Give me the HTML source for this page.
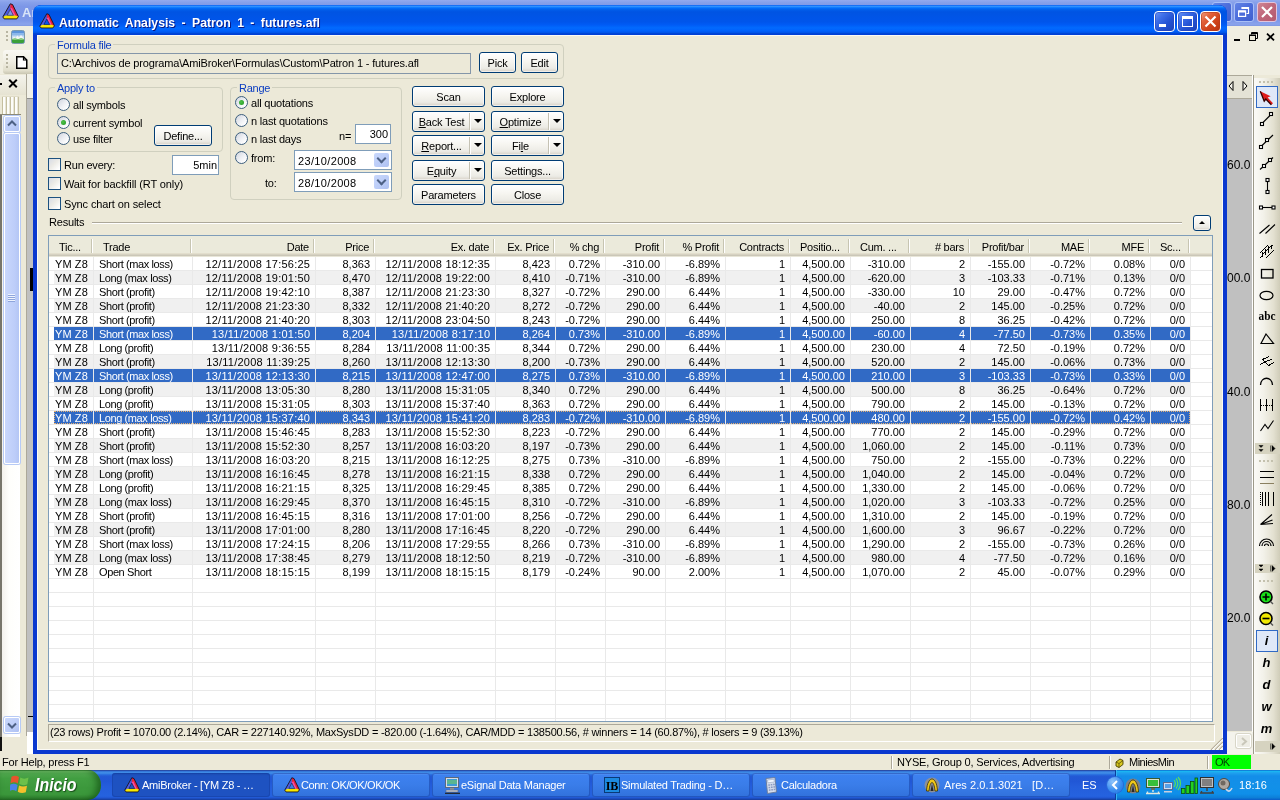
<!DOCTYPE html>
<html lang="es"><head><meta charset="utf-8"><title>AmiBroker - Automatic Analysis</title>
<style>
*{box-sizing:border-box;margin:0;padding:0}
html,body{width:1280px;height:800px;overflow:hidden}
body{will-change:transform;position:relative;background:#ECE9D8;font-family:"Liberation Sans",sans-serif;font-size:11px;color:#000;line-height:13px}
.abs,.abs>*{position:absolute}
div,span,i,b{position:absolute;display:block}
span.t{white-space:nowrap}
u{text-decoration:underline}

/* ===== main (inactive) window ===== */
#mtitle{left:0;top:0;width:1280px;height:26px;background:linear-gradient(to bottom,#93aaee 0,#86a0ea 10%,#7d97e7 25%,#7a94e6 55%,#7f99e8 80%,#8aa3ec 93%,#7f98e2 100%)}
#mtitle .txt{left:22px;top:5px;font:bold 13px "Liberation Sans",sans-serif;color:#d8e4f8;white-space:nowrap;line-height:16px}
#menubar{left:0;top:26px;width:1280px;height:24px;background:#f0eee1}
#tb1{left:0;top:26px;width:1280px;height:49px;background:#f0eee1}
#tb2{left:0;top:72px;width:1280px;height:4px;background:#ECE9D8}

/* ===== dialog window ===== */
#dlg{left:33px;top:5px;width:1194px;height:749px;background:#0a38cf;border-radius:8px 8px 0 0;overflow:hidden}
#dtitle{left:0;top:0;width:1194px;height:30px;border-radius:8px 8px 0 0;background:linear-gradient(to bottom,#0058ee 0%,#3593ff 4%,#288eff 6%,#127dff 8%,#036ffc 10%,#0262ee 14%,#0057e5 20%,#0054e3 24%,#0055eb 56%,#005bf5 66%,#026afe 76%,#0061fc 86%,#0055ea 92%,#0048d6 94%,#003dd7 100%)}
#dtitle .txt{left:26px;top:10px;font:bold 13px "Liberation Sans",sans-serif;color:#fff;white-space:nowrap;line-height:16px;text-shadow:1px 1px 0 #0a1883;letter-spacing:0;word-spacing:3.16px;transform:scaleX(.942);transform-origin:0 0}
#dclient{left:4px;top:30px;width:1186px;height:715px;background:#ECE9D8;border:1px solid #fbfaf5}
.wb{top:6px;width:21px;height:21px;border:1px solid #fff;border-radius:4px;background:linear-gradient(135deg,#6a95f5 0,#3d6ee8 30%,#2453d4 60%,#1b41b8 100%);box-shadow:inset 0 0 0 1px rgba(40,70,190,.6)}
.wb.cl{background:linear-gradient(135deg,#f0a080 0,#e2633c 30%,#d1451c 60%,#b93210 100%);box-shadow:inset 0 0 0 1px rgba(180,60,30,.6)}

/* ===== form controls (coords relative to page via #form at 0,0) ===== */
#form{left:0;top:0;width:0;height:0}
.grp{border:1px solid #d0d0bf;border-radius:4px}
.gl{color:#0a3cc0;background:#ECE9D8;padding:0 2px;white-space:nowrap;letter-spacing:-.25px}
.lbl{white-space:nowrap;letter-spacing:-.2px}
.btn{border:1px solid #003c74;border-radius:3px;background:linear-gradient(to bottom,#fff 0,#f6f5f0 45%,#ecebe5 80%,#d6d0c5 100%);text-align:center;line-height:20px;white-space:nowrap;letter-spacing:-.2px;box-shadow:inset 0 0 0 1px rgba(255,255,255,.6)}
.btn span{position:static;display:inline}
.edit{border:1px solid #7f9db9;background:#fff;text-align:right;padding:0 2px;white-space:nowrap}
.radio{width:13px;height:13px;border:1px solid #3d5f7e;border-radius:50%;background:linear-gradient(135deg,#d6dae2 10%,#eef0f4 50%,#fff 85%)}
.radio.on::after{content:"";position:absolute;left:3px;top:3px;width:5px;height:5px;border-radius:50%;background:radial-gradient(circle at 40% 40%,#4fc24a,#1f961f)}
.chk{width:13px;height:13px;border:1px solid #1c5180;background:linear-gradient(135deg,#d9dde6 5%,#ecebe6 45%,#fff 90%)}
.combo{border:1px solid #7f9db9;background:#fff}
.combo .v{left:3px;top:4px;white-space:nowrap;letter-spacing:.35px}
.combo .dd{left:79px;top:2px;width:15px;height:14px;border-radius:2px;background:linear-gradient(135deg,#c9d8fc,#bccdf8 55%,#adc0f1)}
.combo .dd::after{content:"";position:absolute;left:4px;top:2px;width:5px;height:5px;border-right:2px solid #4d6185;border-bottom:2px solid #4d6185;transform:rotate(45deg)}

/* ===== list view ===== */
.lv{left:48px;top:235px;width:1165px;height:487px;border:1px solid #7f9db9;background:#fff;overflow:hidden}
.lvh{left:0;top:0;width:1163px;height:21px;background:linear-gradient(to bottom,#ebeadb 0,#ebeadb 17px,#e2decd 17px,#e2decd 18px,#d6d2c2 18px,#d6d2c2 19px,#cbc7b8 19px,#cbc7b8 20px,#e8e6d8 20px)}
.hc{top:4px;height:14px;line-height:14px;white-space:nowrap;letter-spacing:-.25px}
.hc.r{text-align:right}
.hd{top:3px;width:1px;height:14px;background:#c7c5b2;box-shadow:1px 0 0 #fff}
.rb{left:5px;width:1136px;height:13px;background:#f0f0f0}
.rb.sel{background:#316ac5}
.rb.foc{outline:1px dotted #e8b070;outline-offset:-1px}
.row{left:0;width:1163px;height:14px}
.row.sel{color:#fff}
.c{top:0;height:14px;line-height:14px;white-space:nowrap}
.c.r{text-align:right}
.c.d{letter-spacing:.25px;margin-left:.25px}
.c.c1{letter-spacing:-.39px}
.c.c0{letter-spacing:.1px}
.grid{left:0;top:21px;width:1163px;height:470px;background:repeating-linear-gradient(to bottom,transparent 0,transparent 13px,#e9e9e9 13px,#e9e9e9 14px);pointer-events:none}
.vl{top:21px;width:1px;height:470px;background:#e9e9e9}
.row.sel ~ .x{}

/* ===== status / taskbar ===== */
#mstatus{left:0;top:754px;width:1280px;height:17px;background:#ECE9D8}
#taskbar{left:0;top:770px;width:1280px;height:30px;background:linear-gradient(to bottom,#1f2f86 0,#3165c4 3%,#3682e5 6%,#4490e6 10%,#3883e5 12%,#2b71e0 15%,#2663da 18%,#235bd6 20%,#2258d5 23%,#2157d6 38%,#245ddb 54%,#2562df 86%,#245fdc 89%,#2158d4 92%,#1d4ec0 95%,#1941a5 98%)}
#start{left:0;top:0;width:101px;height:30px;border-radius:0 13px 13px 0/0 15px 15px 0;background:linear-gradient(to bottom,#2f7d2f 0,#6cbf66 5%,#52ac50 12%,#429f42 28%,#3c983c 60%,#3c9a3c 82%,#338833 94%,#2a742a 100%);box-shadow:inset -4px 0 7px rgba(0,50,0,.5)}
#start .txt{left:35px;top:5px;font:italic bold 18px "Liberation Sans",sans-serif;color:#fff;line-height:20px;text-shadow:1px 1px 1px #1a4d1a;letter-spacing:0;transform:scaleX(.885);transform-origin:0 0}
.tbtn{top:3px;height:24px;border-radius:3px;background:linear-gradient(to bottom,#5e9bf5 0,#3d81f0 10%,#3a7de9 50%,#3171dc 100%);color:#fff;white-space:nowrap;box-shadow:inset 0 0 0 1px rgba(20,60,160,.5)}
.tbtn.act{background:linear-gradient(to bottom,#1a49ad 0,#1e52c1 12%,#1e52c1 100%)}
.tbtn .txt{left:30px;top:6px;color:#fff;white-space:nowrap;letter-spacing:-.25px}
#tray{left:951px;top:0;width:329px;height:30px;background:linear-gradient(to bottom,#095bc9 0,#19b9f3 4%,#1fa0ee 10%,#138ee9 20%,#1290e8 55%,#0f8fe9 80%,#0d7fd8 92%,#095bc9 100%);box-shadow:inset 1px 0 0 #0a3e9a,inset 2px 0 0 #37b4f4}
.ax{font-size:12px;letter-spacing:0;line-height:14px;color:#000}
.mwb{width:20px;height:20px;border:1px solid #a9bff6;border-radius:3px;background:linear-gradient(135deg,#6384e6 0,#4d6edc 45%,#3f5fcd 100%)}
.mwb.cl{background:linear-gradient(135deg,#cf8694 0,#c0687c 45%,#b45a70 100%);border-color:#e2c4dc}
.btn.sp{text-align:left}
.btn.sp .bl{position:absolute;display:block;left:0;top:0;width:57px;text-align:center}
.btn.sp::before{content:"";position:absolute;left:56px;top:1px;width:1px;height:17px;background:#c5c2b4;box-shadow:1px 0 0 #fff}
.btn.sp::after{content:"";position:absolute;left:61px;top:7px;border:4px solid transparent;border-top:4px solid #000;border-bottom:0}
.ti{position:absolute;left:12px;top:4px}
.sep{top:2px;width:1px;height:13px;background:#aca899;box-shadow:1px 0 0 #fff}

</style></head><body>
<!-- ================= MAIN WINDOW (background) ================= -->
<div id="mtitle"><span class="txt">Ar</span></div>
<div id="menubar"></div>
<div id="tb1"></div>
<div id="leftstrip" style="left:0;top:0;width:40px;height:754px">
  <!-- AmiBroker icon in main title -->
  <svg style="position:absolute;left:2px;top:3px" width="17" height="17" viewBox="0 0 17 17">
    <polygon points="8.300,.800 .800,14 3.300,15.800 8.300,6.200" fill="#4a5ae0"/><polygon points="8.300,.800 10.600,1.600 16.400,13.600 13.400,14.200 8.300,6.200" fill="#e8203a"/><polygon points="8.300,6.200 9.800,4.600 13.400,12.200 11.400,12.400" fill="#f050b0"/><polygon points=".800,14 3.600,12.400 13.600,12.400 16.400,13.600 14.800,15.900 2.200,15.900" fill="#f8e800"/><path d="M8.300 .800 L.800 14 L2.200 15.900 L14.800 15.900 L16.400 13.600 L10.600 1.600 Z" fill="none" stroke="#181018" stroke-width=".9" stroke-linejoin="round"/><path d="M8.300 6.400 L5.200 12.300 L11.400 12.300 Z" fill="#7e98e8" stroke="#181018" stroke-width=".5"/>
  </svg>
  <!-- menubar row -->
  <div style="left:6px;top:31px;width:2px;height:12px;background:repeating-linear-gradient(to bottom,#b8b5a2 0,#b8b5a2 2px,transparent 2px,transparent 4px)"></div>
  <svg style="position:absolute;left:11px;top:30px" width="14" height="14" viewBox="0 0 14 14">
    <rect x=".500" y=".500" width="13" height="13" rx="2" fill="#5c94dc" stroke="#7a9ab0" stroke-width="1"/>
    <rect x="1" y="3" width="12" height="3" fill="#8cb8ea"/>
    <rect x="1" y="5.500" width="12" height="3" fill="#c4daf2"/>
    <path d="M1 9 L3 6.500 L4.500 8 L6.500 5.500 L8 7.500 L10 5 L13 8.500 L13 10 L1 10 Z" fill="#f4f6f6"/>
    <path d="M1 9.500 H13 V11.500 Q13 13 11.500 13 H2.500 Q1 13 1 11.500 Z" fill="#3aa03a"/>
    <path d="M1 9.500 L4 8.700 L7 9.600 L10 8.600 L13 9.500" fill="none" stroke="#6cc060" stroke-width="1"/>
  </svg>
  <!-- toolbar row 2 -->
  <div style="left:3px;top:50px;width:60px;height:24px;border-radius:3px 0 0 3px;background:linear-gradient(to bottom,#f9f8f3 0,#f1efe4 45%,#e2dfcd 85%,#c9c6b2 100%)"></div>
  <div style="left:6px;top:54px;width:2px;height:14px;background:repeating-linear-gradient(to bottom,#b8b5a2 0,#b8b5a2 2px,transparent 2px,transparent 4px)"></div>
  <svg style="position:absolute;left:16px;top:56px" width="12" height="13" viewBox="0 0 12 13">
    <path d="M.75 .75 H7.5 L10.75 4 V12.25 H.75 Z" fill="#fff" stroke="#000" stroke-width="1.5" stroke-linejoin="miter"/>
    <path d="M7.5 .75 V4 H10.75" fill="none" stroke="#000" stroke-width="1.2"/>
  </svg>
  <!-- panel header -->
  <div style="left:0;top:74px;width:27px;height:680px;background:#ECE9D8"></div>
  <div style="left:0;top:75px;width:26px;height:20px;background:linear-gradient(to bottom,#f4f3ec,#e6e3d2)"></div>
  <div style="left:0;top:83px;width:2px;height:2px;background:#000"></div>
  <svg style="position:absolute;left:8px;top:79px" width="10" height="9" viewBox="0 0 10 9"><path d="M1.2 .8 L8.8 8.2 M8.8 .8 L1.2 8.2" stroke="#000" stroke-width="2"/></svg>
  <div style="left:26px;top:74px;width:1px;height:662px;background:#aca899"></div>
  <div style="left:27px;top:74px;width:6px;height:24px;background:#f2f1e8"></div>
  <div style="left:27px;top:98px;width:6px;height:634px;background:#c0c0c0;border-top:1px solid #8c8c8c"></div>
  <div style="left:27px;top:732px;width:6px;height:22px;background:#fff"></div>
  <div style="left:30px;top:268px;width:3px;height:23px;background:#000"></div>
  <div style="left:28px;top:716px;width:5px;height:1px;background:#000"></div>
  <!-- tab strip -->
  <div style="left:2px;top:96px;width:17px;height:18px;background:repeating-linear-gradient(to right,#c5bfa0 0,#c5bfa0 1px,#fdfdfa 1px,#fdfdfa 3px,#e8e5d6 3px,#e8e5d6 4px);border-top:1px solid #e0dcc8"></div>
  <div style="left:0;top:114px;width:21px;height:1px;background:#8d8a78"></div>
  <!-- scrollbar -->
  <div style="left:0;top:115px;width:2px;height:622px;background:#77756a"></div>
  <div style="left:2px;top:115px;width:18px;height:622px;background:linear-gradient(to right,#f3f1ec,#fefefb 40%,#fff)"></div>
  <div style="left:4px;top:116px;width:16px;height:16px;border:1px solid #fff;border-radius:2px;background:linear-gradient(135deg,#cad8fc,#bccdf8 60%,#aec0f2);box-shadow:0 0 0 1px #b7caf5"></div>
  <svg style="position:absolute;left:7px;top:120px" width="10" height="7" viewBox="0 0 10 7"><path d="M1 5.5 L5 1.5 L9 5.5" fill="none" stroke="#4d6185" stroke-width="2"/></svg>
  <div style="left:4px;top:133px;width:16px;height:331px;border:1px solid #fff;border-radius:2px;background:linear-gradient(to right,#c9d7fc,#bdcdf9 70%,#b4c6f4);box-shadow:0 0 0 1px #b7caf5"></div>
  <div style="left:8px;top:294px;width:7px;height:8px;background:repeating-linear-gradient(to bottom,#eef3fe 0,#eef3fe 1px,#8ea5dc 1px,#8ea5dc 2px)"></div>
  <div style="left:4px;top:717px;width:16px;height:16px;border:1px solid #fff;border-radius:2px;background:linear-gradient(135deg,#cad8fc,#bccdf8 60%,#aec0f2);box-shadow:0 0 0 1px #b7caf5"></div>
  <svg style="position:absolute;left:7px;top:722px" width="10" height="7" viewBox="0 0 10 7"><path d="M1 1.5 L5 5.5 L9 1.5" fill="none" stroke="#4d6185" stroke-width="2"/></svg>
  <div style="left:0;top:737px;width:2px;height:14px;background:#111"></div>
</div>

<div id="rightstrip" style="left:1227px;top:26px;width:53px;height:728px">
  <!-- main window caption buttons (inactive) -->
  <div class="mwb" style="left:-15px;top:-24px"></div>
  <div class="mwb" style="left:7px;top:-24px"><svg width="18" height="18" viewBox="0 0 18 18" style="position:absolute;left:0;top:0"><path d="M7 6 V4.500 H13.500 V10.500 H11.500" fill="none" stroke="#fff" stroke-width="1.200"/><path d="M7 5 H13.500" stroke="#fff" stroke-width="2"/><rect x="3.600" y="8" width="7" height="5.400" fill="none" stroke="#fff" stroke-width="1.200"/><path d="M3.600 8.500 H10.600" stroke="#fff" stroke-width="2"/></svg></div>
  <div class="mwb cl" style="left:30px;top:-24px"><svg width="18" height="18" viewBox="0 0 18 18" style="position:absolute;left:0;top:0"><path d="M4 4 L14 14 M14 4 L4 14" stroke="#fff" stroke-width="2.200"/></svg></div>
  <!-- MDI controls -->
  <div style="left:7px;top:13px;width:6px;height:2px;background:#000"></div>
  <svg style="position:absolute;left:22px;top:6px" width="9" height="9" viewBox="0 0 9 9"><path d="M2.5 .5 H8.5 V6.5 H6.5 M2.5 .5 V1.5 H8.5 M2.5 1 V2.5" fill="none" stroke="#000" stroke-width="1"/><rect x=".5" y="3" width="6" height="5.5" fill="#ECE9D8" stroke="#000" stroke-width="1"/><path d="M.5 3.5 H6.5" stroke="#000" stroke-width="1"/></svg>
  <svg style="position:absolute;left:39px;top:7px" width="9" height="8" viewBox="0 0 9 8"><path d="M1 .7 L8 7.3 M8 .7 L1 7.3" stroke="#000" stroke-width="1.8"/></svg>
  <!-- tab nav -->
  <div style="left:0;top:49px;width:27px;height:24px;background:#e4e2d5;border:1px solid #aca899;border-left:0"></div>
  <svg style="position:absolute;left:1px;top:54px" width="24" height="12" viewBox="0 0 24 12"><path d="M5 1.5 L1 6 L5 10.5 Z M15 1.5 L19 6 L15 10.5 Z" fill="#f4f3ec" stroke="#000" stroke-width="1"/></svg>
  <!-- chart gray -->
  <div style="left:0;top:73px;width:25px;height:632px;background:#c0c0c0"></div><div style="left:25px;top:49px;width:1px;height:679px;background:#fff"></div>
  <span class="lbl ax" style="left:0;top:132px">60.0</span>
  <span class="lbl ax" style="left:0;top:245px">00.0</span>
  <span class="lbl ax" style="left:0;top:359px">40.0</span>
  <span class="lbl ax" style="left:0;top:472px">80.0</span>
  <span class="lbl ax" style="left:0;top:585px">20.0</span>
  <div style="left:0;top:706px;width:26px;height:22px;background:#f4f3ec"></div>
  <div style="left:9px;top:708px;width:15px;height:14px;border:1px solid #fff;border-radius:2px;background:#eeede5;box-shadow:0 0 0 1px #d8d6c8"></div>
  <svg style="position:absolute;left:13px;top:711px" width="8" height="9" viewBox="0 0 8 9"><path d="M2 1 L6 4.5 L2 8" fill="none" stroke="#c9c7ba" stroke-width="2"/></svg>
  <div style="left:26px;top:49px;width:1px;height:679px;background:#9d9a8a"></div>
  <!-- right toolbar -->
  <div id="rtb" style="left:27px;top:52px;width:26px;height:676px;background:linear-gradient(to right,#fbfaf7 0,#f3f2ea 35%,#e3e0d0 75%,#cfccb8 100%)"></div>
<svg style="position:absolute;left:27px;top:52px" width="26" height="676" viewBox="1254 78 26 676" font-family="Liberation Sans, sans-serif">
  <g fill="none" stroke="#000" stroke-width="1" shape-rendering="crispEdges">
  <!-- grippers -->
  <g stroke="#c4c1ae" stroke-dasharray="2 2" stroke-width="2"><path d="M1259 82 H1274"/><path d="M1259 461 H1274"/><path d="M1259 581 H1274"/></g>
  <!-- selected arrow tool -->
  <rect x="1256.5" y="86.500" width="21" height="21" fill="#dfe8f8" stroke="#316ac5"/>
  </g>
  <path d="M1260.300 91.300 L1264.200 101.200 L1265.800 99 L1271.300 104.800 L1273 103.200 L1267.600 97.500 L1270.600 96.300 Z" fill="#e01a1a"/><path d="M1260.300 91.300 L1264.200 101.200 L1265.800 99 L1271.300 104.800" fill="none" stroke="#300" stroke-width="1.300"/>
  <g fill="none" stroke="#000" stroke-width="1.100">
  <!-- 1 trend line -->
  <path d="M1262.500 123 L1270.500 115"/><rect x="1260.500" y="122.500" width="3" height="3" fill="#fff"/><rect x="1269.500" y="112.500" width="3" height="3" fill="#fff"/>
  <!-- 2 ray -->
  <path d="M1261.500 146 L1273 135"/><rect x="1259.500" y="145.500" width="3" height="3" fill="#fff"/><rect x="1265.500" y="138.500" width="3" height="3" fill="#fff"/>
  <!-- 3 extended -->
  <path d="M1260 169.500 L1273 157.500"/><rect x="1262.500" y="164.500" width="3" height="3" fill="#fff"/><rect x="1268.500" y="158.500" width="3" height="3" fill="#fff"/>
  <!-- 4 vertical seg -->
  <path d="M1267.500 181 V191"/><rect x="1266" y="178.500" width="3" height="3" fill="#fff"/><rect x="1266" y="190.500" width="3" height="3" fill="#fff"/>
  <!-- 5 horizontal seg -->
  <path d="M1261 207.500 H1273"/><rect x="1259.500" y="206" width="3" height="3" fill="#fff"/><rect x="1272" y="206" width="3" height="3" fill="#fff"/>
  <!-- 6 parallel -->
  <path d="M1259.500 233.500 L1269.500 225 M1265.500 233.500 L1275 224.500"/>
  <!-- 7 channel hatch -->
  <g shape-rendering="crispEdges" stroke-width="1"><path d="M1260 253 L1268 245 M1266 258 L1274 250"/>
  <path d="M1260 258 L1262.500 255.500 M1262.500 252 V257 M1262.500 254.500 L1265.500 251.500 M1265.500 249 V255 M1265.500 251.500 L1268.500 248.500 M1268.500 246 V253 M1268.500 248.500 L1271.500 246 M1271.500 245 V249 M1271.500 246 L1273 245"/></g>
  <!-- 8 rect -->
  <rect x="1261.500" y="269.500" width="11.500" height="8.500" stroke-width="1.300"/>
  <!-- 9 ellipse -->
  <ellipse cx="1266.500" cy="295.500" rx="6.500" ry="4.200" stroke-width="1.200"/>
  <!-- 11 triangle -->
  <path d="M1266 334 L1261 343.500 H1273.500 Z" stroke-width="1.200"/>
  <!-- 12 pitchfork -->
  <g shape-rendering="crispEdges" stroke-width="1"><path d="M1260 364.500 L1265 362 M1262.500 359.500 L1268.500 365.500"/>
  <path d="M1262.500 359.500 L1269 356.500 M1265 362 L1272 359 M1268.500 365.500 L1274 362.500"/></g>
  <!-- 13 arc -->
  <path d="M1260.500 385 C1261 376 1272 376 1272.500 385" stroke-width="1.300"/>
  <!-- 14 cycles -->
  <g shape-rendering="crispEdges"><path d="M1260.500 399 V411 M1266.500 399 V411 M1272.500 399 V411" stroke-width="1"/><path d="M1261 405.500 H1273" stroke-dasharray="1 1"/></g>
  <!-- 15 zigzag -->
  <path d="M1260.500 431 L1265 424.500 L1268 428.500 L1273.500 420.500" stroke-width="1.100"/>
  <!-- 16 fib lines -->
  <g shape-rendering="crispEdges"><path d="M1260 471.500 H1274 M1260 477.500 H1274" stroke-width="1"/><path d="M1260 483.500 H1274" stroke="#8a8060" stroke-width="1"/></g>
  <!-- 17 fib time -->
  <g shape-rendering="crispEdges"><path d="M1260.500 492 V506" stroke-dasharray="1 1"/><path d="M1262.500 492 V506 M1265.500 492 V506 M1268.500 492 V506 M1273.500 492 V506" stroke-width="1"/></g>
  <!-- 18 fan -->
  <path d="M1260.500 524.500 L1272 514.500 M1260.500 524.500 L1272.500 520 M1260.500 524.500 L1273 523.500"/>
  <!-- 19 arcs -->
  <path d="M1259.500 546 A7 7 0 0 1 1273.500 546 M1262 546 A4.500 4.500 0 0 1 1271 546 M1264.500 546 A2 2 0 0 1 1268.500 546" stroke-width="1.200"/>
  </g>
  <!-- 10 abc -->
  <text x="1258.500" y="320" font-family="Liberation Serif, serif" font-weight="bold" font-size="11.500" fill="#000" textLength="17" lengthAdjust="spacingAndGlyphs">abc</text>
  <!-- overflow bars -->
  <g>
    <rect x="1255" y="443" width="25" height="11" fill="#d6d3c0"/><rect x="1255" y="564" width="25" height="9" fill="#d6d3c0"/><rect x="1255" y="741" width="25" height="11" fill="#d6d3c0"/>
    <path d="M1259 445.500 h4 l-2 2 Z M1259 449.500 h4 l-2 2 Z M1270.500 445.500 v6 M1272 445.500 l3 3 l-3 3 Z" fill="#000" stroke="#000" stroke-width=".5"/>
    <path d="M1259 565 h4 l-2 2 Z M1259 569 h4 l-2 2 Z M1270.500 565.500 v6 M1272 565.500 l3 3 l-3 3 Z" fill="#000" stroke="#000" stroke-width=".5"/>
    <path d="M1270.500 743.500 v6 M1272 743.500 l3 3 l-3 3 Z" fill="#000" stroke="#000" stroke-width=".5"/>
  </g>
  <!-- 20 zoom in / 21 zoom out -->
  <circle cx="1266" cy="597" r="6" fill="#18e018" stroke="#000" stroke-width="1.600"/><path d="M1262.500 597 h7 M1266 593.500 v7" stroke="#000" stroke-width="1.600"/><path d="M1270.500 601.500 l2.500 2.500" stroke="#555" stroke-width="1.400"/>
  <circle cx="1266" cy="618.500" r="6" fill="#f0e800" stroke="#000" stroke-width="1.600"/><path d="M1262.500 618.500 h7" stroke="#000" stroke-width="1.600"/><path d="M1270.500 623 l2.500 2.500" stroke="#555" stroke-width="1.400"/>
  <!-- 22 selected i -->
  <rect x="1256.500" y="630" width="21" height="21" fill="#dfe8f8" stroke="#316ac5" shape-rendering="crispEdges"/>
  <g font-style="italic" font-weight="bold" font-size="13" fill="#000" text-anchor="middle">
    <text x="1266.500" y="645">i</text>
    <text x="1266.500" y="667">h</text>
    <text x="1266.500" y="689">d</text>
    <text x="1266.500" y="711">w</text>
    <text x="1266.500" y="733">m</text>
  </g>
</svg>

</div>


<!-- ================= DIALOG ================= -->
<div id="dlg">
  <div id="dtitle">
    <svg style="position:absolute;left:6px;top:8px" width="16" height="16" viewBox="0 0 17 17">
      <polygon points="8.300,.800 .800,14 3.300,15.800 8.300,6.200" fill="#4a5ae0"/><polygon points="8.300,.800 10.600,1.600 16.400,13.600 13.400,14.200 8.300,6.200" fill="#e8203a"/><polygon points="8.300,6.200 9.800,4.600 13.400,12.200 11.400,12.400" fill="#f050b0"/><polygon points=".800,14 3.600,12.400 13.600,12.400 16.400,13.600 14.800,15.900 2.200,15.900" fill="#f8e800"/><path d="M8.300 .800 L.800 14 L2.200 15.900 L14.800 15.900 L16.400 13.600 L10.600 1.600 Z" fill="none" stroke="#181018" stroke-width=".9" stroke-linejoin="round"/><path d="M8.300 6.400 L5.200 12.300 L11.400 12.300 Z" fill="#0a55e6" stroke="#181018" stroke-width=".5"/>
    </svg>
    <span class="txt">Automatic Analysis - Patron 1 - futures.afl</span>
    <div class="wb" style="left:1121px"><i style="left:4px;top:12px;width:7px;height:3px;background:#fff"></i></div>
    <div class="wb" style="left:1144px"><i style="left:4px;top:4px;width:11px;height:11px;border:1px solid #fff;border-top-width:3px"></i></div>
    <div class="wb cl" style="left:1167px"><svg width="19" height="19" viewBox="0 0 19 19" style="position:absolute;left:0;top:0"><path d="M4.500 4.500 L14.500 14.500 M14.500 4.500 L4.500 14.500" stroke="#fff" stroke-width="2.200"/></svg></div>
  </div>
  <div id="dclient"></div>
</div>

<!-- ================= FORM (page coords) ================= -->
<div id="form">
  <!-- Formula file -->
  <div class="grp" style="left:48px;top:44px;width:516px;height:35px"></div>
  <span class="gl" style="left:55px;top:39px">Formula file</span>
  <div class="edit" style="left:57px;top:53px;width:414px;height:21px;background:#ECE9D8;border-color:#8496a9;text-align:left;line-height:19px;padding-left:3px;letter-spacing:-.15px">C:\Archivos de programa\AmiBroker\Formulas\Custom\Patron 1 - futures.afl</div>
  <div class="btn" style="left:479px;top:52px;width:37px;height:21px">Pick</div>
  <div class="btn" style="left:521px;top:52px;width:37px;height:21px">Edit</div>

  <!-- Apply to -->
  <div class="grp" style="left:48px;top:87px;width:175px;height:65px"></div>
  <span class="gl" style="left:55px;top:82px">Apply to</span>
  <div class="radio" style="left:57px;top:98px"></div><span class="lbl" style="left:73px;top:99px">all symbols</span>
  <div class="radio on" style="left:57px;top:116px"></div><span class="lbl" style="left:73px;top:117px">current symbol</span>
  <div class="radio" style="left:57px;top:132px"></div><span class="lbl" style="left:73px;top:133px">use filter</span>
  <div class="btn" style="left:154px;top:125px;width:58px;height:21px">Define...</div>

  <div class="chk" style="left:48px;top:158px"></div><span class="lbl" style="left:64px;top:159px">Run every:</span>
  <div class="edit" style="left:172px;top:155px;width:47px;height:20px;line-height:18px;padding-right:1px">5min</div>
  <div class="chk" style="left:48px;top:177px"></div><span class="lbl" style="left:64px;top:178px;letter-spacing:-.11px">Wait for backfill (RT only)</span>
  <div class="chk" style="left:48px;top:197px"></div><span class="lbl" style="left:64px;top:198px;letter-spacing:-.115px">Sync chart on select</span>

  <!-- Range -->
  <div class="grp" style="left:230px;top:87px;width:172px;height:113px"></div>
  <span class="gl" style="left:237px;top:82px">Range</span>
  <div class="radio on" style="left:235px;top:96px"></div><span class="lbl" style="left:251px;top:97px">all quotations</span>
  <div class="radio" style="left:235px;top:114px"></div><span class="lbl" style="left:251px;top:115px">n last quotations</span>
  <div class="radio" style="left:235px;top:132px"></div><span class="lbl" style="left:251px;top:133px">n last days</span>
  <div class="radio" style="left:235px;top:151px"></div><span class="lbl" style="left:251px;top:152px">from:</span>
  <span class="lbl" style="left:339px;top:130px">n=</span>
  <div class="edit" style="left:355px;top:124px;width:36px;height:20px;line-height:18px">300</div>
  <div class="combo" style="left:294px;top:150px;width:98px;height:20px"><span class="v">23/10/2008</span><div class="dd"></div></div>
  <span class="lbl" style="left:265px;top:177px">to:</span>
  <div class="combo" style="left:294px;top:172px;width:98px;height:20px"><span class="v">28/10/2008</span><div class="dd"></div></div>

  <!-- buttons -->
  <div class="btn" style="left:412px;top:86px;width:73px;height:21px">Scan</div>
  <div class="btn" style="left:491px;top:86px;width:73px;height:21px">Explore</div>
  <div class="btn sp" style="left:412px;top:111px;width:73px;height:21px"><span class="bl"><u>B</u>ack Test</span></div>
  <div class="btn sp" style="left:491px;top:111px;width:73px;height:21px"><span class="bl"><u>O</u>ptimize</span></div>
  <div class="btn sp" style="left:412px;top:135px;width:73px;height:21px"><span class="bl"><u>R</u>eport...</span></div>
  <div class="btn sp" style="left:491px;top:135px;width:73px;height:21px"><span class="bl">Fi<u>l</u>e</span></div>
  <div class="btn sp" style="left:412px;top:160px;width:73px;height:21px"><span class="bl">E<u>q</u>uity</span></div>
  <div class="btn" style="left:491px;top:160px;width:73px;height:21px">Settings...</div>
  <div class="btn" style="left:412px;top:184px;width:73px;height:21px">Parameters</div>
  <div class="btn" style="left:491px;top:184px;width:73px;height:21px">Close</div>

  <!-- Results -->
  <span class="lbl" style="left:49px;top:216px">Results</span>
  <div style="left:92px;top:222px;width:1090px;height:1px;background:#aca899;box-shadow:0 1px 0 #fff"></div>
  <div class="btn" style="left:1193px;top:215px;width:18px;height:16px"><i style="left:5px;top:5px;border:3px solid transparent;border-bottom:3px solid #000;border-top:0"></i></div>
</div>

<div class="lv">
<i class="rb" style="top:35px"></i>
<i class="rb" style="top:63px"></i>
<i class="rb sel" style="top:91px"></i>
<i class="rb" style="top:119px"></i>
<i class="rb sel" style="top:133px"></i>
<i class="rb" style="top:147px"></i>
<i class="rb sel foc" style="top:175px"></i>
<i class="rb" style="top:203px"></i>
<i class="rb" style="top:231px"></i>
<i class="rb" style="top:259px"></i>
<i class="rb" style="top:287px"></i>
<i class="rb" style="top:315px"></i>
<div class="grid"></div>
<i class="vl" style="left:44px"></i>
<i class="vl" style="left:143px"></i>
<i class="vl" style="left:266px"></i>
<i class="vl" style="left:326px"></i>
<i class="vl" style="left:446px"></i>
<i class="vl" style="left:506px"></i>
<i class="vl" style="left:556px"></i>
<i class="vl" style="left:616px"></i>
<i class="vl" style="left:676px"></i>
<i class="vl" style="left:741px"></i>
<i class="vl" style="left:801px"></i>
<i class="vl" style="left:861px"></i>
<i class="vl" style="left:921px"></i>
<i class="vl" style="left:981px"></i>
<i class="vl" style="left:1041px"></i>
<i class="vl" style="left:1101px"></i>
<i class="vl" style="left:1141px"></i>
<div class="lvh">
<span class="hc" style="left:10px">Tic...</span>
<i class="hd" style="left:42px"></i>
<span class="hc" style="left:54px">Trade</span>
<i class="hd" style="left:141px"></i>
<span class="hc r" style="left:143px;width:117px">Date</span>
<i class="hd" style="left:264px"></i>
<span class="hc r" style="left:266px;width:54px">Price</span>
<i class="hd" style="left:324px"></i>
<span class="hc r" style="left:326px;width:114px">Ex. date</span>
<i class="hd" style="left:444px"></i>
<span class="hc r" style="left:446px;width:54px">Ex. Price</span>
<i class="hd" style="left:504px"></i>
<span class="hc r" style="left:506px;width:44px">% chg</span>
<i class="hd" style="left:554px"></i>
<span class="hc r" style="left:556px;width:54px">Profit</span>
<i class="hd" style="left:614px"></i>
<span class="hc r" style="left:616px;width:54px">% Profit</span>
<i class="hd" style="left:674px"></i>
<span class="hc r" style="left:676px;width:59px">Contracts</span>
<i class="hd" style="left:739px"></i>
<span class="hc" style="left:751px">Positio...</span>
<i class="hd" style="left:799px"></i>
<span class="hc" style="left:811px">Cum. ...</span>
<i class="hd" style="left:859px"></i>
<span class="hc r" style="left:861px;width:54px"># bars</span>
<i class="hd" style="left:919px"></i>
<span class="hc r" style="left:921px;width:54px">Profit/bar</span>
<i class="hd" style="left:979px"></i>
<span class="hc r" style="left:981px;width:54px">MAE</span>
<i class="hd" style="left:1039px"></i>
<span class="hc r" style="left:1041px;width:54px">MFE</span>
<i class="hd" style="left:1099px"></i>
<span class="hc" style="left:1111px">Sc...</span>
<i class="hd" style="left:1139px"></i>
</div>
<div class="row" style="top:21px">
<span class="c c0" style="left:6px">YM Z8</span>
<span class="c c1" style="left:50px">Short (max loss)</span>
<span class="c r d" style="left:143px;width:118px">12/11/2008 17:56:25</span>
<span class="c r n" style="left:266px;width:55px">8,363</span>
<span class="c r d" style="left:326px;width:115px">12/11/2008 18:12:35</span>
<span class="c r n" style="left:446px;width:55px">8,423</span>
<span class="c r n" style="left:506px;width:45px">0.72%</span>
<span class="c r n" style="left:556px;width:55px">-310.00</span>
<span class="c r n" style="left:616px;width:55px">-6.89%</span>
<span class="c r n" style="left:676px;width:60px">1</span>
<span class="c r n" style="left:741px;width:55px">4,500.00</span>
<span class="c r n" style="left:801px;width:55px">-310.00</span>
<span class="c r n" style="left:861px;width:55px">2</span>
<span class="c r n" style="left:921px;width:55px">-155.00</span>
<span class="c r n" style="left:981px;width:55px">-0.72%</span>
<span class="c r n" style="left:1041px;width:55px">0.08%</span>
<span class="c r n" style="left:1101px;width:35px">0/0</span>
</div>
<div class="row" style="top:35px">
<span class="c c0" style="left:6px">YM Z8</span>
<span class="c c1" style="left:50px">Long (max loss)</span>
<span class="c r d" style="left:143px;width:118px">12/11/2008 19:01:50</span>
<span class="c r n" style="left:266px;width:55px">8,470</span>
<span class="c r d" style="left:326px;width:115px">12/11/2008 19:22:00</span>
<span class="c r n" style="left:446px;width:55px">8,410</span>
<span class="c r n" style="left:506px;width:45px">-0.71%</span>
<span class="c r n" style="left:556px;width:55px">-310.00</span>
<span class="c r n" style="left:616px;width:55px">-6.89%</span>
<span class="c r n" style="left:676px;width:60px">1</span>
<span class="c r n" style="left:741px;width:55px">4,500.00</span>
<span class="c r n" style="left:801px;width:55px">-620.00</span>
<span class="c r n" style="left:861px;width:55px">3</span>
<span class="c r n" style="left:921px;width:55px">-103.33</span>
<span class="c r n" style="left:981px;width:55px">-0.71%</span>
<span class="c r n" style="left:1041px;width:55px">0.13%</span>
<span class="c r n" style="left:1101px;width:35px">0/0</span>
</div>
<div class="row" style="top:49px">
<span class="c c0" style="left:6px">YM Z8</span>
<span class="c c1" style="left:50px">Short (profit)</span>
<span class="c r d" style="left:143px;width:118px">12/11/2008 19:42:10</span>
<span class="c r n" style="left:266px;width:55px">8,387</span>
<span class="c r d" style="left:326px;width:115px">12/11/2008 21:23:30</span>
<span class="c r n" style="left:446px;width:55px">8,327</span>
<span class="c r n" style="left:506px;width:45px">-0.72%</span>
<span class="c r n" style="left:556px;width:55px">290.00</span>
<span class="c r n" style="left:616px;width:55px">6.44%</span>
<span class="c r n" style="left:676px;width:60px">1</span>
<span class="c r n" style="left:741px;width:55px">4,500.00</span>
<span class="c r n" style="left:801px;width:55px">-330.00</span>
<span class="c r n" style="left:861px;width:55px">10</span>
<span class="c r n" style="left:921px;width:55px">29.00</span>
<span class="c r n" style="left:981px;width:55px">-0.47%</span>
<span class="c r n" style="left:1041px;width:55px">0.72%</span>
<span class="c r n" style="left:1101px;width:35px">0/0</span>
</div>
<div class="row" style="top:63px">
<span class="c c0" style="left:6px">YM Z8</span>
<span class="c c1" style="left:50px">Short (profit)</span>
<span class="c r d" style="left:143px;width:118px">12/11/2008 21:23:30</span>
<span class="c r n" style="left:266px;width:55px">8,332</span>
<span class="c r d" style="left:326px;width:115px">12/11/2008 21:40:20</span>
<span class="c r n" style="left:446px;width:55px">8,272</span>
<span class="c r n" style="left:506px;width:45px">-0.72%</span>
<span class="c r n" style="left:556px;width:55px">290.00</span>
<span class="c r n" style="left:616px;width:55px">6.44%</span>
<span class="c r n" style="left:676px;width:60px">1</span>
<span class="c r n" style="left:741px;width:55px">4,500.00</span>
<span class="c r n" style="left:801px;width:55px">-40.00</span>
<span class="c r n" style="left:861px;width:55px">2</span>
<span class="c r n" style="left:921px;width:55px">145.00</span>
<span class="c r n" style="left:981px;width:55px">-0.25%</span>
<span class="c r n" style="left:1041px;width:55px">0.72%</span>
<span class="c r n" style="left:1101px;width:35px">0/0</span>
</div>
<div class="row" style="top:77px">
<span class="c c0" style="left:6px">YM Z8</span>
<span class="c c1" style="left:50px">Short (profit)</span>
<span class="c r d" style="left:143px;width:118px">12/11/2008 21:40:20</span>
<span class="c r n" style="left:266px;width:55px">8,303</span>
<span class="c r d" style="left:326px;width:115px">12/11/2008 23:04:50</span>
<span class="c r n" style="left:446px;width:55px">8,243</span>
<span class="c r n" style="left:506px;width:45px">-0.72%</span>
<span class="c r n" style="left:556px;width:55px">290.00</span>
<span class="c r n" style="left:616px;width:55px">6.44%</span>
<span class="c r n" style="left:676px;width:60px">1</span>
<span class="c r n" style="left:741px;width:55px">4,500.00</span>
<span class="c r n" style="left:801px;width:55px">250.00</span>
<span class="c r n" style="left:861px;width:55px">8</span>
<span class="c r n" style="left:921px;width:55px">36.25</span>
<span class="c r n" style="left:981px;width:55px">-0.42%</span>
<span class="c r n" style="left:1041px;width:55px">0.72%</span>
<span class="c r n" style="left:1101px;width:35px">0/0</span>
</div>
<div class="row sel" style="top:91px">
<span class="c c0" style="left:6px">YM Z8</span>
<span class="c c1" style="left:50px">Short (max loss)</span>
<span class="c r d" style="left:143px;width:118px">13/11/2008 1:01:50</span>
<span class="c r n" style="left:266px;width:55px">8,204</span>
<span class="c r d" style="left:326px;width:115px">13/11/2008 8:17:10</span>
<span class="c r n" style="left:446px;width:55px">8,264</span>
<span class="c r n" style="left:506px;width:45px">0.73%</span>
<span class="c r n" style="left:556px;width:55px">-310.00</span>
<span class="c r n" style="left:616px;width:55px">-6.89%</span>
<span class="c r n" style="left:676px;width:60px">1</span>
<span class="c r n" style="left:741px;width:55px">4,500.00</span>
<span class="c r n" style="left:801px;width:55px">-60.00</span>
<span class="c r n" style="left:861px;width:55px">4</span>
<span class="c r n" style="left:921px;width:55px">-77.50</span>
<span class="c r n" style="left:981px;width:55px">-0.73%</span>
<span class="c r n" style="left:1041px;width:55px">0.35%</span>
<span class="c r n" style="left:1101px;width:35px">0/0</span>
</div>
<div class="row" style="top:105px">
<span class="c c0" style="left:6px">YM Z8</span>
<span class="c c1" style="left:50px">Long (profit)</span>
<span class="c r d" style="left:143px;width:118px">13/11/2008 9:36:55</span>
<span class="c r n" style="left:266px;width:55px">8,284</span>
<span class="c r d" style="left:326px;width:115px">13/11/2008 11:00:35</span>
<span class="c r n" style="left:446px;width:55px">8,344</span>
<span class="c r n" style="left:506px;width:45px">0.72%</span>
<span class="c r n" style="left:556px;width:55px">290.00</span>
<span class="c r n" style="left:616px;width:55px">6.44%</span>
<span class="c r n" style="left:676px;width:60px">1</span>
<span class="c r n" style="left:741px;width:55px">4,500.00</span>
<span class="c r n" style="left:801px;width:55px">230.00</span>
<span class="c r n" style="left:861px;width:55px">4</span>
<span class="c r n" style="left:921px;width:55px">72.50</span>
<span class="c r n" style="left:981px;width:55px">-0.19%</span>
<span class="c r n" style="left:1041px;width:55px">0.72%</span>
<span class="c r n" style="left:1101px;width:35px">0/0</span>
</div>
<div class="row" style="top:119px">
<span class="c c0" style="left:6px">YM Z8</span>
<span class="c c1" style="left:50px">Short (profit)</span>
<span class="c r d" style="left:143px;width:118px">13/11/2008 11:39:25</span>
<span class="c r n" style="left:266px;width:55px">8,260</span>
<span class="c r d" style="left:326px;width:115px">13/11/2008 12:13:30</span>
<span class="c r n" style="left:446px;width:55px">8,200</span>
<span class="c r n" style="left:506px;width:45px">-0.73%</span>
<span class="c r n" style="left:556px;width:55px">290.00</span>
<span class="c r n" style="left:616px;width:55px">6.44%</span>
<span class="c r n" style="left:676px;width:60px">1</span>
<span class="c r n" style="left:741px;width:55px">4,500.00</span>
<span class="c r n" style="left:801px;width:55px">520.00</span>
<span class="c r n" style="left:861px;width:55px">2</span>
<span class="c r n" style="left:921px;width:55px">145.00</span>
<span class="c r n" style="left:981px;width:55px">-0.06%</span>
<span class="c r n" style="left:1041px;width:55px">0.73%</span>
<span class="c r n" style="left:1101px;width:35px">0/0</span>
</div>
<div class="row sel" style="top:133px">
<span class="c c0" style="left:6px">YM Z8</span>
<span class="c c1" style="left:50px">Short (max loss)</span>
<span class="c r d" style="left:143px;width:118px">13/11/2008 12:13:30</span>
<span class="c r n" style="left:266px;width:55px">8,215</span>
<span class="c r d" style="left:326px;width:115px">13/11/2008 12:47:00</span>
<span class="c r n" style="left:446px;width:55px">8,275</span>
<span class="c r n" style="left:506px;width:45px">0.73%</span>
<span class="c r n" style="left:556px;width:55px">-310.00</span>
<span class="c r n" style="left:616px;width:55px">-6.89%</span>
<span class="c r n" style="left:676px;width:60px">1</span>
<span class="c r n" style="left:741px;width:55px">4,500.00</span>
<span class="c r n" style="left:801px;width:55px">210.00</span>
<span class="c r n" style="left:861px;width:55px">3</span>
<span class="c r n" style="left:921px;width:55px">-103.33</span>
<span class="c r n" style="left:981px;width:55px">-0.73%</span>
<span class="c r n" style="left:1041px;width:55px">0.33%</span>
<span class="c r n" style="left:1101px;width:35px">0/0</span>
</div>
<div class="row" style="top:147px">
<span class="c c0" style="left:6px">YM Z8</span>
<span class="c c1" style="left:50px">Long (profit)</span>
<span class="c r d" style="left:143px;width:118px">13/11/2008 13:05:30</span>
<span class="c r n" style="left:266px;width:55px">8,280</span>
<span class="c r d" style="left:326px;width:115px">13/11/2008 15:31:05</span>
<span class="c r n" style="left:446px;width:55px">8,340</span>
<span class="c r n" style="left:506px;width:45px">0.72%</span>
<span class="c r n" style="left:556px;width:55px">290.00</span>
<span class="c r n" style="left:616px;width:55px">6.44%</span>
<span class="c r n" style="left:676px;width:60px">1</span>
<span class="c r n" style="left:741px;width:55px">4,500.00</span>
<span class="c r n" style="left:801px;width:55px">500.00</span>
<span class="c r n" style="left:861px;width:55px">8</span>
<span class="c r n" style="left:921px;width:55px">36.25</span>
<span class="c r n" style="left:981px;width:55px">-0.64%</span>
<span class="c r n" style="left:1041px;width:55px">0.72%</span>
<span class="c r n" style="left:1101px;width:35px">0/0</span>
</div>
<div class="row" style="top:161px">
<span class="c c0" style="left:6px">YM Z8</span>
<span class="c c1" style="left:50px">Long (profit)</span>
<span class="c r d" style="left:143px;width:118px">13/11/2008 15:31:05</span>
<span class="c r n" style="left:266px;width:55px">8,303</span>
<span class="c r d" style="left:326px;width:115px">13/11/2008 15:37:40</span>
<span class="c r n" style="left:446px;width:55px">8,363</span>
<span class="c r n" style="left:506px;width:45px">0.72%</span>
<span class="c r n" style="left:556px;width:55px">290.00</span>
<span class="c r n" style="left:616px;width:55px">6.44%</span>
<span class="c r n" style="left:676px;width:60px">1</span>
<span class="c r n" style="left:741px;width:55px">4,500.00</span>
<span class="c r n" style="left:801px;width:55px">790.00</span>
<span class="c r n" style="left:861px;width:55px">2</span>
<span class="c r n" style="left:921px;width:55px">145.00</span>
<span class="c r n" style="left:981px;width:55px">-0.13%</span>
<span class="c r n" style="left:1041px;width:55px">0.72%</span>
<span class="c r n" style="left:1101px;width:35px">0/0</span>
</div>
<div class="row sel" style="top:175px">
<span class="c c0" style="left:6px">YM Z8</span>
<span class="c c1" style="left:50px">Long (max loss)</span>
<span class="c r d" style="left:143px;width:118px">13/11/2008 15:37:40</span>
<span class="c r n" style="left:266px;width:55px">8,343</span>
<span class="c r d" style="left:326px;width:115px">13/11/2008 15:41:20</span>
<span class="c r n" style="left:446px;width:55px">8,283</span>
<span class="c r n" style="left:506px;width:45px">-0.72%</span>
<span class="c r n" style="left:556px;width:55px">-310.00</span>
<span class="c r n" style="left:616px;width:55px">-6.89%</span>
<span class="c r n" style="left:676px;width:60px">1</span>
<span class="c r n" style="left:741px;width:55px">4,500.00</span>
<span class="c r n" style="left:801px;width:55px">480.00</span>
<span class="c r n" style="left:861px;width:55px">2</span>
<span class="c r n" style="left:921px;width:55px">-155.00</span>
<span class="c r n" style="left:981px;width:55px">-0.72%</span>
<span class="c r n" style="left:1041px;width:55px">0.42%</span>
<span class="c r n" style="left:1101px;width:35px">0/0</span>
</div>
<div class="row" style="top:189px">
<span class="c c0" style="left:6px">YM Z8</span>
<span class="c c1" style="left:50px">Short (profit)</span>
<span class="c r d" style="left:143px;width:118px">13/11/2008 15:46:45</span>
<span class="c r n" style="left:266px;width:55px">8,283</span>
<span class="c r d" style="left:326px;width:115px">13/11/2008 15:52:30</span>
<span class="c r n" style="left:446px;width:55px">8,223</span>
<span class="c r n" style="left:506px;width:45px">-0.72%</span>
<span class="c r n" style="left:556px;width:55px">290.00</span>
<span class="c r n" style="left:616px;width:55px">6.44%</span>
<span class="c r n" style="left:676px;width:60px">1</span>
<span class="c r n" style="left:741px;width:55px">4,500.00</span>
<span class="c r n" style="left:801px;width:55px">770.00</span>
<span class="c r n" style="left:861px;width:55px">2</span>
<span class="c r n" style="left:921px;width:55px">145.00</span>
<span class="c r n" style="left:981px;width:55px">-0.29%</span>
<span class="c r n" style="left:1041px;width:55px">0.72%</span>
<span class="c r n" style="left:1101px;width:35px">0/0</span>
</div>
<div class="row" style="top:203px">
<span class="c c0" style="left:6px">YM Z8</span>
<span class="c c1" style="left:50px">Short (profit)</span>
<span class="c r d" style="left:143px;width:118px">13/11/2008 15:52:30</span>
<span class="c r n" style="left:266px;width:55px">8,257</span>
<span class="c r d" style="left:326px;width:115px">13/11/2008 16:03:20</span>
<span class="c r n" style="left:446px;width:55px">8,197</span>
<span class="c r n" style="left:506px;width:45px">-0.73%</span>
<span class="c r n" style="left:556px;width:55px">290.00</span>
<span class="c r n" style="left:616px;width:55px">6.44%</span>
<span class="c r n" style="left:676px;width:60px">1</span>
<span class="c r n" style="left:741px;width:55px">4,500.00</span>
<span class="c r n" style="left:801px;width:55px">1,060.00</span>
<span class="c r n" style="left:861px;width:55px">2</span>
<span class="c r n" style="left:921px;width:55px">145.00</span>
<span class="c r n" style="left:981px;width:55px">-0.11%</span>
<span class="c r n" style="left:1041px;width:55px">0.73%</span>
<span class="c r n" style="left:1101px;width:35px">0/0</span>
</div>
<div class="row" style="top:217px">
<span class="c c0" style="left:6px">YM Z8</span>
<span class="c c1" style="left:50px">Short (max loss)</span>
<span class="c r d" style="left:143px;width:118px">13/11/2008 16:03:20</span>
<span class="c r n" style="left:266px;width:55px">8,215</span>
<span class="c r d" style="left:326px;width:115px">13/11/2008 16:12:25</span>
<span class="c r n" style="left:446px;width:55px">8,275</span>
<span class="c r n" style="left:506px;width:45px">0.73%</span>
<span class="c r n" style="left:556px;width:55px">-310.00</span>
<span class="c r n" style="left:616px;width:55px">-6.89%</span>
<span class="c r n" style="left:676px;width:60px">1</span>
<span class="c r n" style="left:741px;width:55px">4,500.00</span>
<span class="c r n" style="left:801px;width:55px">750.00</span>
<span class="c r n" style="left:861px;width:55px">2</span>
<span class="c r n" style="left:921px;width:55px">-155.00</span>
<span class="c r n" style="left:981px;width:55px">-0.73%</span>
<span class="c r n" style="left:1041px;width:55px">0.22%</span>
<span class="c r n" style="left:1101px;width:35px">0/0</span>
</div>
<div class="row" style="top:231px">
<span class="c c0" style="left:6px">YM Z8</span>
<span class="c c1" style="left:50px">Long (profit)</span>
<span class="c r d" style="left:143px;width:118px">13/11/2008 16:16:45</span>
<span class="c r n" style="left:266px;width:55px">8,278</span>
<span class="c r d" style="left:326px;width:115px">13/11/2008 16:21:15</span>
<span class="c r n" style="left:446px;width:55px">8,338</span>
<span class="c r n" style="left:506px;width:45px">0.72%</span>
<span class="c r n" style="left:556px;width:55px">290.00</span>
<span class="c r n" style="left:616px;width:55px">6.44%</span>
<span class="c r n" style="left:676px;width:60px">1</span>
<span class="c r n" style="left:741px;width:55px">4,500.00</span>
<span class="c r n" style="left:801px;width:55px">1,040.00</span>
<span class="c r n" style="left:861px;width:55px">2</span>
<span class="c r n" style="left:921px;width:55px">145.00</span>
<span class="c r n" style="left:981px;width:55px">-0.04%</span>
<span class="c r n" style="left:1041px;width:55px">0.72%</span>
<span class="c r n" style="left:1101px;width:35px">0/0</span>
</div>
<div class="row" style="top:245px">
<span class="c c0" style="left:6px">YM Z8</span>
<span class="c c1" style="left:50px">Long (profit)</span>
<span class="c r d" style="left:143px;width:118px">13/11/2008 16:21:15</span>
<span class="c r n" style="left:266px;width:55px">8,325</span>
<span class="c r d" style="left:326px;width:115px">13/11/2008 16:29:45</span>
<span class="c r n" style="left:446px;width:55px">8,385</span>
<span class="c r n" style="left:506px;width:45px">0.72%</span>
<span class="c r n" style="left:556px;width:55px">290.00</span>
<span class="c r n" style="left:616px;width:55px">6.44%</span>
<span class="c r n" style="left:676px;width:60px">1</span>
<span class="c r n" style="left:741px;width:55px">4,500.00</span>
<span class="c r n" style="left:801px;width:55px">1,330.00</span>
<span class="c r n" style="left:861px;width:55px">2</span>
<span class="c r n" style="left:921px;width:55px">145.00</span>
<span class="c r n" style="left:981px;width:55px">-0.06%</span>
<span class="c r n" style="left:1041px;width:55px">0.72%</span>
<span class="c r n" style="left:1101px;width:35px">0/0</span>
</div>
<div class="row" style="top:259px">
<span class="c c0" style="left:6px">YM Z8</span>
<span class="c c1" style="left:50px">Long (max loss)</span>
<span class="c r d" style="left:143px;width:118px">13/11/2008 16:29:45</span>
<span class="c r n" style="left:266px;width:55px">8,370</span>
<span class="c r d" style="left:326px;width:115px">13/11/2008 16:45:15</span>
<span class="c r n" style="left:446px;width:55px">8,310</span>
<span class="c r n" style="left:506px;width:45px">-0.72%</span>
<span class="c r n" style="left:556px;width:55px">-310.00</span>
<span class="c r n" style="left:616px;width:55px">-6.89%</span>
<span class="c r n" style="left:676px;width:60px">1</span>
<span class="c r n" style="left:741px;width:55px">4,500.00</span>
<span class="c r n" style="left:801px;width:55px">1,020.00</span>
<span class="c r n" style="left:861px;width:55px">3</span>
<span class="c r n" style="left:921px;width:55px">-103.33</span>
<span class="c r n" style="left:981px;width:55px">-0.72%</span>
<span class="c r n" style="left:1041px;width:55px">0.25%</span>
<span class="c r n" style="left:1101px;width:35px">0/0</span>
</div>
<div class="row" style="top:273px">
<span class="c c0" style="left:6px">YM Z8</span>
<span class="c c1" style="left:50px">Short (profit)</span>
<span class="c r d" style="left:143px;width:118px">13/11/2008 16:45:15</span>
<span class="c r n" style="left:266px;width:55px">8,316</span>
<span class="c r d" style="left:326px;width:115px">13/11/2008 17:01:00</span>
<span class="c r n" style="left:446px;width:55px">8,256</span>
<span class="c r n" style="left:506px;width:45px">-0.72%</span>
<span class="c r n" style="left:556px;width:55px">290.00</span>
<span class="c r n" style="left:616px;width:55px">6.44%</span>
<span class="c r n" style="left:676px;width:60px">1</span>
<span class="c r n" style="left:741px;width:55px">4,500.00</span>
<span class="c r n" style="left:801px;width:55px">1,310.00</span>
<span class="c r n" style="left:861px;width:55px">2</span>
<span class="c r n" style="left:921px;width:55px">145.00</span>
<span class="c r n" style="left:981px;width:55px">-0.19%</span>
<span class="c r n" style="left:1041px;width:55px">0.72%</span>
<span class="c r n" style="left:1101px;width:35px">0/0</span>
</div>
<div class="row" style="top:287px">
<span class="c c0" style="left:6px">YM Z8</span>
<span class="c c1" style="left:50px">Short (profit)</span>
<span class="c r d" style="left:143px;width:118px">13/11/2008 17:01:00</span>
<span class="c r n" style="left:266px;width:55px">8,280</span>
<span class="c r d" style="left:326px;width:115px">13/11/2008 17:16:45</span>
<span class="c r n" style="left:446px;width:55px">8,220</span>
<span class="c r n" style="left:506px;width:45px">-0.72%</span>
<span class="c r n" style="left:556px;width:55px">290.00</span>
<span class="c r n" style="left:616px;width:55px">6.44%</span>
<span class="c r n" style="left:676px;width:60px">1</span>
<span class="c r n" style="left:741px;width:55px">4,500.00</span>
<span class="c r n" style="left:801px;width:55px">1,600.00</span>
<span class="c r n" style="left:861px;width:55px">3</span>
<span class="c r n" style="left:921px;width:55px">96.67</span>
<span class="c r n" style="left:981px;width:55px">-0.22%</span>
<span class="c r n" style="left:1041px;width:55px">0.72%</span>
<span class="c r n" style="left:1101px;width:35px">0/0</span>
</div>
<div class="row" style="top:301px">
<span class="c c0" style="left:6px">YM Z8</span>
<span class="c c1" style="left:50px">Short (max loss)</span>
<span class="c r d" style="left:143px;width:118px">13/11/2008 17:24:15</span>
<span class="c r n" style="left:266px;width:55px">8,206</span>
<span class="c r d" style="left:326px;width:115px">13/11/2008 17:29:55</span>
<span class="c r n" style="left:446px;width:55px">8,266</span>
<span class="c r n" style="left:506px;width:45px">0.73%</span>
<span class="c r n" style="left:556px;width:55px">-310.00</span>
<span class="c r n" style="left:616px;width:55px">-6.89%</span>
<span class="c r n" style="left:676px;width:60px">1</span>
<span class="c r n" style="left:741px;width:55px">4,500.00</span>
<span class="c r n" style="left:801px;width:55px">1,290.00</span>
<span class="c r n" style="left:861px;width:55px">2</span>
<span class="c r n" style="left:921px;width:55px">-155.00</span>
<span class="c r n" style="left:981px;width:55px">-0.73%</span>
<span class="c r n" style="left:1041px;width:55px">0.26%</span>
<span class="c r n" style="left:1101px;width:35px">0/0</span>
</div>
<div class="row" style="top:315px">
<span class="c c0" style="left:6px">YM Z8</span>
<span class="c c1" style="left:50px">Long (max loss)</span>
<span class="c r d" style="left:143px;width:118px">13/11/2008 17:38:45</span>
<span class="c r n" style="left:266px;width:55px">8,279</span>
<span class="c r d" style="left:326px;width:115px">13/11/2008 18:12:50</span>
<span class="c r n" style="left:446px;width:55px">8,219</span>
<span class="c r n" style="left:506px;width:45px">-0.72%</span>
<span class="c r n" style="left:556px;width:55px">-310.00</span>
<span class="c r n" style="left:616px;width:55px">-6.89%</span>
<span class="c r n" style="left:676px;width:60px">1</span>
<span class="c r n" style="left:741px;width:55px">4,500.00</span>
<span class="c r n" style="left:801px;width:55px">980.00</span>
<span class="c r n" style="left:861px;width:55px">4</span>
<span class="c r n" style="left:921px;width:55px">-77.50</span>
<span class="c r n" style="left:981px;width:55px">-0.72%</span>
<span class="c r n" style="left:1041px;width:55px">0.16%</span>
<span class="c r n" style="left:1101px;width:35px">0/0</span>
</div>
<div class="row" style="top:329px">
<span class="c c0" style="left:6px">YM Z8</span>
<span class="c c1" style="left:50px">Open Short</span>
<span class="c r d" style="left:143px;width:118px">13/11/2008 18:15:15</span>
<span class="c r n" style="left:266px;width:55px">8,199</span>
<span class="c r d" style="left:326px;width:115px">13/11/2008 18:15:15</span>
<span class="c r n" style="left:446px;width:55px">8,179</span>
<span class="c r n" style="left:506px;width:45px">-0.24%</span>
<span class="c r n" style="left:556px;width:55px">90.00</span>
<span class="c r n" style="left:616px;width:55px">2.00%</span>
<span class="c r n" style="left:676px;width:60px">1</span>
<span class="c r n" style="left:741px;width:55px">4,500.00</span>
<span class="c r n" style="left:801px;width:55px">1,070.00</span>
<span class="c r n" style="left:861px;width:55px">2</span>
<span class="c r n" style="left:921px;width:55px">45.00</span>
<span class="c r n" style="left:981px;width:55px">-0.07%</span>
<span class="c r n" style="left:1041px;width:55px">0.29%</span>
<span class="c r n" style="left:1101px;width:35px">0/0</span>
</div>
</div>

<!-- dialog status -->
<div style="left:48px;top:724px;width:1167px;height:18px;border:1px solid;border-color:#aca899 #fff #fff #aca899"></div>
<svg style="position:absolute;left:1210px;top:738px" width="13" height="12" viewBox="0 0 13 12"><path d="M1 12 L13 0 M5 12 L13 4 M9 12 L13 8" stroke="#b8b09c" stroke-width="1.300"/><path d="M2.200 12 L13 1.200 M6.200 12 L13 5.200 M10.200 12 L13 9.200" stroke="#fff" stroke-width="1"/></svg>
<span class="lbl" style="left:50px;top:726px;letter-spacing:-.228px">(23 rows) Profit = 1070.00 (2.14%), CAR = 227140.92%, MaxSysDD = -820.00 (-1.64%), CAR/MDD = 138500.56, # winners = 14 (60.87%), # losers = 9 (39.13%)</span>

<!-- ================= MAIN STATUS BAR ================= -->
<div id="mstatus">
  <span class="lbl" style="left:2px;top:2px">For Help, press F1</span>
  <i class="sep" style="left:891px"></i><i class="sep" style="left:1109px"></i><i class="sep" style="left:1207px"></i>
  <span class="lbl" style="left:897px;top:2px;letter-spacing:-.18px">NYSE, Group 0, Services, Advertising</span>
  <svg style="position:absolute;left:1115px;top:4px" width="9" height="10" viewBox="0 0 9 10"><path d="M1 4 L5 1 L8 2.500 L8 6.500 L4 9.500 L1 8 Z" fill="#d8c820" stroke="#4a4200" stroke-width=".9"/><path d="M1 4 L4 5.500 L8 2.500 M4 5.500 V9.500" fill="none" stroke="#4a4200" stroke-width=".7"/></svg>
  <span class="lbl" style="left:1129px;top:2px;letter-spacing:-.5px">MiniesMin</span>
  <div style="left:1212px;top:1px;width:39px;height:14px;background:#00ff00"></div>
  <span class="lbl" style="left:1215px;top:2px;color:#003c00;letter-spacing:-.8px">OK</span>
</div>

<!-- ================= TASKBAR ================= -->
<div id="taskbar">
  <div id="start">
    <svg style="position:absolute;left:10px;top:5px" width="20" height="19" viewBox="0 0 20 19">
      <path d="M1.500 1.800 C4 .2 6.500 .4 9 2 L7.800 8.500 C5.500 7 3 7 .5 8.300 Z" fill="#e8542c"/>
      <path d="M10.300 2.600 C12.800 4 15.500 4 18.500 2.600 L17.300 9.300 C14.500 10.600 11.800 10.400 9.200 9 Z" fill="#6cc04a"/>
      <path d="M.3 9.600 C2.800 8.300 5.300 8.400 7.600 9.900 L6.400 16.200 C4 14.800 1.600 14.800 -.8 16 Z" fill="#4a82e8"/>
      <path d="M9 10.400 C11.500 11.800 14.200 11.900 17 10.700 L15.800 17.200 C13 18.400 10.300 18.200 7.800 16.800 Z" fill="#f4c02c"/>
    </svg>
    <span class="txt">Inicio</span>
  </div>
  <div class="tbtn act" style="left:112px;width:158px"><svg class="ti" width="16" height="16" viewBox="0 0 17 17"><polygon points="8.300,.800 .800,14 3.300,15.800 8.300,6.200" fill="#4a5ae0"/><polygon points="8.300,.800 10.600,1.600 16.400,13.600 13.400,14.200 8.300,6.200" fill="#e8203a"/><polygon points="8.300,6.200 9.800,4.600 13.400,12.200 11.400,12.400" fill="#f050b0"/><polygon points=".800,14 3.600,12.400 13.600,12.400 16.400,13.600 14.800,15.900 2.200,15.900" fill="#f8e800"/><path d="M8.300 .800 L.800 14 L2.200 15.900 L14.800 15.900 L16.400 13.600 L10.600 1.600 Z" fill="none" stroke="#181018" stroke-width=".9" stroke-linejoin="round"/><path d="M8.300 6.400 L5.200 12.300 L11.400 12.300 Z" fill="#1e52c1" stroke="#181018" stroke-width=".5"/></svg><span class="txt">AmiBroker - [YM Z8 - …</span></div>
  <div class="tbtn" style="left:272px;width:158px"><svg class="ti" width="16" height="16" viewBox="0 0 17 17"><polygon points="8.300,.800 .800,14 3.300,15.800 8.300,6.200" fill="#4a5ae0"/><polygon points="8.300,.800 10.600,1.600 16.400,13.600 13.400,14.200 8.300,6.200" fill="#e8203a"/><polygon points="8.300,6.200 9.800,4.600 13.400,12.200 11.400,12.400" fill="#f050b0"/><polygon points=".800,14 3.600,12.400 13.600,12.400 16.400,13.600 14.800,15.900 2.200,15.900" fill="#f8e800"/><path d="M8.300 .800 L.800 14 L2.200 15.900 L14.800 15.900 L16.400 13.600 L10.600 1.600 Z" fill="none" stroke="#181018" stroke-width=".9" stroke-linejoin="round"/><path d="M8.300 6.400 L5.200 12.300 L11.400 12.300 Z" fill="#3a7de9" stroke="#181018" stroke-width=".5"/></svg><span class="txt" style="left:29px;letter-spacing:-.36px">Conn: OK/OK/OK/OK</span></div>
  <div class="tbtn" style="left:432px;width:158px"><svg class="ti" width="17" height="17" viewBox="0 0 17 17"><rect x="1.500" y=".500" width="13" height="10" fill="#d8dce4" stroke="#5a6a80"/><rect x="3" y="2" width="10" height="7" fill="#3a9ad8"/><path d="M3 4 h10 M3 6 h10" stroke="#7ad04a" stroke-width="1"/><rect x="6" y="11" width="4" height="2" fill="#8a8f98"/><rect x="2" y="13" width="12" height="2" fill="#c8ccd4" stroke="#5a6a80" stroke-width=".6"/><path d="M1 16.300 h15" stroke="#222" stroke-width="1.200"/></svg><span class="txt" style="left:29px">eSignal Data Manager</span></div>
  <div class="tbtn" style="left:592px;width:158px"><svg class="ti" width="16" height="16" viewBox="0 0 16 16"><rect x=".500" y=".500" width="15" height="15" fill="#1c8ae0" stroke="#0a3a78"/><text x="8" y="12.500" text-anchor="middle" font-family="Liberation Serif, serif" font-weight="bold" font-size="12" fill="#000">IB</text></svg><span class="txt" style="left:29px">Simulated Trading - D…</span></div>
  <div class="tbtn" style="left:752px;width:158px"><svg class="ti" width="16" height="17" viewBox="0 0 16 17" style="left:11px"><path d="M3 1.500 L12 .500 L13.500 15 L4.500 16.500 Z" fill="#d4dcec" stroke="#6a7a98" stroke-width=".9"/><path d="M4.500 3 L11 2.300 L11.300 5 L4.800 5.800 Z" fill="#f4f8ff" stroke="#8a9ab8" stroke-width=".5"/><g fill="#8a9ac0"><rect x="5.300" y="7.300" width="1.600" height="1.500"/><rect x="7.700" y="7" width="1.600" height="1.500"/><rect x="10.100" y="6.700" width="1.600" height="1.500"/><rect x="5.600" y="9.800" width="1.600" height="1.500"/><rect x="8" y="9.500" width="1.600" height="1.500"/><rect x="10.400" y="9.200" width="1.600" height="1.500"/><rect x="5.900" y="12.300" width="1.600" height="1.500"/><rect x="8.300" y="12" width="1.600" height="1.500"/><rect x="10.700" y="11.700" width="1.600" height="1.500"/></g></svg><span class="txt" style="left:29px">Calculadora</span></div>
  <div class="tbtn" style="left:912px;width:158px"><svg class="ti" width="16" height="16" viewBox="0 0 16 16"><circle cx="8" cy="8" r="7.500" fill="#8d9098"/><path d="M2.500 14 C3 5 6 2 8 2 C10 2 13 5 13.500 14 L11 14 C10.500 8 9 5.500 8 5.500 C7 5.500 5.500 8 5 14 Z" fill="#f0c81a" stroke="#3a3000" stroke-width=".8"/><path d="M8 7 L9.500 14 H6.500 Z" fill="#2a2a2a"/></svg><span class="txt" style="left:32px;letter-spacing:.07px">Ares 2.0.1.3021&nbsp;&nbsp; [D…</span></div>
  <span class="lbl" style="left:1082px;top:9px;color:#fff;letter-spacing:0">ES</span>
  <div id="tray" style="left:1115px;width:165px">
    <span class="lbl" style="left:124px;top:9px;color:#fff;letter-spacing:.1px">18:16</span>
    <svg style="position:absolute;left:9px;top:6px" width="112" height="20" viewBox="1124 776 112 20">
      <!-- ares -->
      <circle cx="1133" cy="786" r="7.500" fill="#7d8088"/><path d="M1127.500 792 C1128 783 1131 780 1133 780 C1135 780 1138 783 1138.500 792 L1136 792 C1135.500 786 1134 783.500 1133 783.500 C1132 783.500 1130.500 786 1130 792 Z" fill="#f0c81a" stroke="#3a3000" stroke-width=".8"/><path d="M1133 785 L1134.500 792 H1131.500 Z" fill="#2a2a2a"/>
      <!-- network green -->
      <rect x="1146.500" y="778.500" width="13" height="9" fill="#d8e4d0" stroke="#3a5a30"/><rect x="1148" y="780" width="10" height="6" fill="#38c038"/><rect x="1151" y="788" width="4" height="2" fill="#607060"/><path d="M1153 790 v2 M1146 793.500 h14 M1147.500 793.500 v-2 M1158.500 793.500 v-2" stroke="#e0e8e0" stroke-width="1.400" fill="none"/>
      <!-- wireless -->
      <rect x="1163.500" y="782.500" width="9" height="7" fill="#d0dcf0" stroke="#5a6a90"/><rect x="1165" y="784" width="6" height="4" fill="#58a0e8"/><rect x="1164" y="791" width="8" height="1.500" fill="#c8d0e0"/><path d="M1174 780 a4 5 0 0 1 0 7 M1176 778.500 a6 7 0 0 1 0 10 M1178 777 a8 9 0 0 1 0 13" stroke="#5ae05a" stroke-width="1.200" fill="none"/>
      <!-- signal bars -->
      <g fill="#22d022" stroke="#0a500a" stroke-width=".8"><rect x="1181.500" y="788.500" width="3.500" height="5"/><rect x="1186" y="785.500" width="3.500" height="8"/><rect x="1190.500" y="781.500" width="3.500" height="12"/><rect x="1195" y="778" width="2.500" height="15.500"/></g>
      <!-- monitor gray -->
      <rect x="1200.500" y="777.500" width="13" height="10" fill="#c0c0c0" stroke="#303030"/><rect x="1202" y="779" width="10" height="7" fill="#808080"/><path d="M1207 788 v3 M1200 793 h14 M1201.500 793 v-2 M1212.500 793 v-2" stroke="#404040" stroke-width="1.400" fill="none"/>
      <!-- speaker -->
      <circle cx="1224" cy="784" r="5.500" fill="#b0a8a0" stroke="#504840"/><circle cx="1223" cy="783" r="2.500" fill="#706860"/><path d="M1226 789 c2 3 4 3 6 -1" stroke="#d0d8e8" stroke-width="1.600" fill="none"/>
    </svg>
  </div>
  <div style="left:1107px;top:7px;width:16px;height:16px;border-radius:50%;background:radial-gradient(circle at 35% 30%,#8fc4fb 0,#3b8ef0 55%,#1f6fe0 100%);box-shadow:0 0 0 1px #2a66d8"></div>
  <svg style="position:absolute;left:1111px;top:10px" width="8" height="10" viewBox="0 0 8 10"><path d="M6 1 L2 5 L6 9" fill="none" stroke="#fff" stroke-width="2"/></svg>
</div>

</body></html>
